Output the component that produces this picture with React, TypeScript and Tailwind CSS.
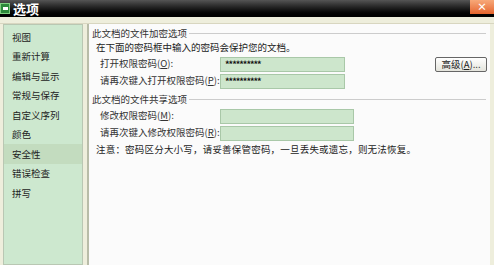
import React from "react";

const font = { fontFamily: '"Noto Sans CJK SC", "Liberation Sans", sans-serif' };

const items = ["视图", "重新计算", "编辑与显示", "常规与保存", "自定义序列", "颜色", "安全性", "错误检查", "拼写"];

function Field({ label, k, stars, wide }: { label: string; k: string; stars?: boolean; wide?: boolean }) {
  return (
    <div className="flex items-center h-[16px]">
      <div className="w-[128px] pl-[8px] text-[9.5px] text-[#333] whitespace-nowrap leading-none">
        {label}(<span className="underline">{k}</span>):
      </div>
      <div className={`h-[15px] ${wide ? "w-[134px]" : "w-[125px]"} bg-[#cde6cc] border border-[#a9c8a8] flex items-center pl-[4px] text-[9px] leading-none text-[#111] font-bold tracking-[-1px]`}>
        {stars ? "**********" : ""}
      </div>
    </div>
  );
}

export default function App() {
  return (
    <div className="w-[494px] h-[265px] overflow-hidden bg-[#ece9d8] flex flex-col" style={font}>
      <div className="h-[17px] flex items-center justify-between bg-gradient-to-b from-[#555] via-[#1c1c1c] to-[#000]">
        <div className="flex items-center gap-[3px]">
          <div className="w-[10px] h-[11px] bg-[#2c8a3a] border border-[#7fd07f] flex items-center justify-center">
            <div className="w-[5px] h-[3px] bg-white"></div>
          </div>
          <span className="text-white font-bold text-[13px] leading-none">选项</span>
        </div>
        <div className="w-[24px] h-[14px] self-start bg-gradient-to-b from-[#f7a878] to-[#e4642c] flex items-center justify-center text-white text-[10px] leading-none font-bold">×</div>
      </div>
      <div className="h-[7px] bg-[#eeeedc] border-b border-[#d8d6c0]"></div>
      <div className="flex-1 flex bg-[#eeeedc] pl-[3px]">
        <div className="w-[80px] bg-[#cde8cf] border border-[#b9c7b3] pt-[2px] flex flex-col">
          {items.map((t) => (
            <div
              key={t}
              className={`h-[19.5px] flex items-center pl-[8px] text-[9.5px] text-[#222] ${t === "安全性" ? "bg-[#c3dcbf]" : ""}`}
            >
              {t}
            </div>
          ))}
        </div>
        <div className="w-[4px]"></div>
        <div className="flex-1 bg-[#fbfbfb] border-l-2 border-[#b8bca8] pl-[3px] pt-[2px] flex flex-col">
          <div className="flex items-center h-[14px]">
            <span className="text-[9.5px] text-[#333] whitespace-nowrap">此文档的文件加密选项</span>
            <div className="flex-1 h-px bg-[#ccc] ml-[2px] mr-[4px]"></div>
          </div>
          <div className="h-[14px] pl-[4px] text-[9.5px] text-[#222] flex items-center whitespace-nowrap">在下面的密码框中输入的密码会保护您的文档。</div>
          <div className="flex mt-[2px]">
            <div className="flex flex-col gap-[1px]">
              <Field label="打开权限密码" k="O" stars />
              <Field label="请再次键入打开权限密码" k="P" stars />
            </div>
            <div className="ml-[90px] mt-[1px] w-[52px] h-[15px] border border-[#666] rounded-[2px] bg-gradient-to-b from-white to-[#e4e4dc] text-[9.5px] text-[#222] flex items-center justify-center leading-none whitespace-nowrap">
              高级(<span className="underline">A</span>)...
            </div>
          </div>
          <div className="flex items-center h-[14px] mt-[3px]">
            <span className="text-[9.5px] text-[#333] whitespace-nowrap">此文档的文件共享选项</span>
            <div className="flex-1 h-px bg-[#ccc] ml-[2px] mr-[4px]"></div>
          </div>
          <div className="flex flex-col gap-[1px] mt-[2px]">
            <Field label="修改权限密码" k="M" wide />
            <Field label="请再次键入修改权限密码" k="R" wide />
          </div>
          <div className="pl-[4px] mt-[1px] h-[15px] text-[9.5px] text-[#222] flex items-center whitespace-nowrap tracking-[0.2px]">注意：密码区分大小写，请妥善保管密码，一旦丢失或遗忘，则无法恢复。</div>
        </div>
        <div className="w-[4px]"></div>
      </div>
    </div>
  );
}
